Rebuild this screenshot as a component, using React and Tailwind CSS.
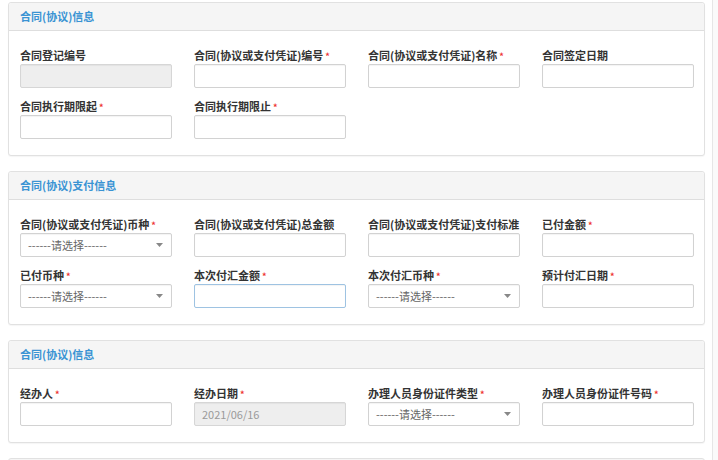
import React from 'react';

const FONT = { fontFamily: '"Noto Sans CJK SC", "Liberation Sans", sans-serif' };

const sections = [
    {
        title: '合同(协议)信息',
        fields: [
            { label: '合同登记编号', type: 'disabled' },
            { label: '合同(协议或支付凭证)编号', required: true },
            { label: '合同(协议或支付凭证)名称', required: true },
            { label: '合同签定日期' },
            { label: '合同执行期限起', required: true },
            { label: '合同执行期限止', required: true },
        ],
    },
    {
        title: '合同(协议)支付信息',
        fields: [
            { label: '合同(协议或支付凭证)币种', required: true, type: 'select' },
            { label: '合同(协议或支付凭证)总金额' },
            { label: '合同(协议或支付凭证)支付标准' },
            { label: '已付金额', required: true },
            { label: '已付币种', required: true, type: 'select' },
            { label: '本次付汇金额', required: true, type: 'focus' },
            { label: '本次付汇币种', required: true, type: 'select' },
            { label: '预计付汇日期', required: true },
        ],
    },
    {
        title: '合同(协议)信息',
        fields: [
            { label: '经办人', required: true },
            { label: '经办日期', required: true, type: 'disabled', value: '2021/06/16' },
            { label: '办理人员身份证件类型', required: true, type: 'select' },
            { label: '办理人员身份证件号码', required: true },
        ],
    },
];

function Field({ field }) {
    const base = 'h-[24px] w-full rounded-[2px] border text-[11px] flex items-center px-[7px] shadow-[inset_0_1px_1px_rgba(0,0,0,0.05)]';
    let control;
    if (field.type === 'select') {
        control = (
            <div className={`${base} border-[#d2d2d2] bg-white justify-between text-[#666]`}>
                <span>------请选择------</span>
                <svg width="7" height="4" viewBox="0 0 7 4" className="mr-[1px]">
                    <path d="M0 0h7L3.5 4z" fill="#888" />
                </svg>
            </div>
        );
    } else if (field.type === 'disabled') {
        control = (
            <div className={`${base} border-[#d6d6d6] bg-[#eeeeee] text-[#9a9a9a]`}>{field.value}</div>
        );
    } else if (field.type === 'focus') {
        control = <div className={`${base} border-[#9ec3e2] bg-white`} />;
    } else {
        control = <div className={`${base} border-[#d2d2d2] bg-white`} />;
    }
    return (
        <div className="flex flex-col">
            <div className="h-[16px] mb-[1px] text-[11px] leading-[16px] font-semibold text-[#333] whitespace-nowrap">
                {field.label}
                {field.required && <span className="text-[#e33] text-[9px] ml-[2px]">*</span>}
            </div>
            {control}
        </div>
    );
}

function Panel({ section }) {
    return (
        <div className="w-[697px] rounded-[3px] border border-[#e1e1e1] bg-white shadow-[0_1px_1px_rgba(0,0,0,0.04)]">
            <div className="h-[28px] flex items-center px-[11px] bg-[#f5f5f5] border-b border-[#dedede] rounded-t-[3px] text-[11px] font-semibold text-[#3a93d3]">
                {section.title}
            </div>
            <div className="pt-[16px] pb-[16px] pl-[11px] grid grid-cols-[repeat(4,152px)] gap-x-[22px] gap-y-[10px]">
                {section.fields.map((f, i) => (
                    <Field key={i} field={f} />
                ))}
            </div>
        </div>
    );
}

export default function App() {
    return (
        <div className="w-[718px] h-[460px] overflow-hidden bg-white flex" style={FONT}>
            <div className="w-[712px] pl-[8px] pt-[2px] flex flex-col gap-[15px]">
                {sections.map((s, i) => (
                    <Panel key={i} section={s} />
                ))}
                <div className="w-[697px] h-[40px] shrink-0 rounded-[3px] border border-[#e1e1e1] bg-[#f5f5f5]" />
            </div>
            <div className="w-[6px] h-full border-l border-[#e6e6e6] bg-[#fafafa]" />
        </div>
    );
}
